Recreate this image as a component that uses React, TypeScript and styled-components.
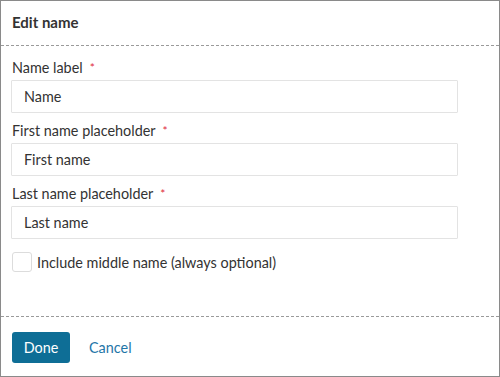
import React from "react";
import styled, { createGlobalStyle } from "styled-components";

const Global = createGlobalStyle`
  html, body { margin: 0; padding: 0; background: #fff; }
  body { font-family: Lato, "Open Sans", sans-serif; color: #333; }
  * { box-sizing: border-box; }
`;

const Dialog = styled.div`
  width: 500px;
  height: 377px;
  border: 1px solid #8a8a8a;
  display: flex;
  flex-direction: column;
  background: #fff;
`;

const Header = styled.div`
  height: 45px;
  flex: none;
  border-bottom: 1px dashed #9a9a9a;
  display: flex;
  align-items: center;
  padding: 0 11px;
`;

const Title = styled.h2`
  margin: 0;
  font-size: 15px;
  font-weight: 700;
  color: #333;
  padding-bottom: 2px;
`;

const Body = styled.div`
  flex: 1;
  padding: 12px 10px 0;
  display: flex;
  flex-direction: column;
  gap: 8px;
`;

const Field = styled.div`
  display: flex;
  flex-direction: column;
  gap: 2px;
  width: 447px;
`;

const Label = styled.label`
  font-size: 14.4px;
  line-height: 20px;
  color: #333;
  padding-left: 1px;
`;

const Required = styled.span`
  color: #e02b3b;
  margin-left: 7px;
  font-size: 12px;
  vertical-align: 1px;
`;

const Input = styled.input`
  height: 33px;
  width: 100%;
  border: 1px solid #e3e3e3;
  border-radius: 1px;
  padding: 0 12px;
  font-family: Lato, "Open Sans", sans-serif;
  font-size: 14.4px;
  color: #333;
  outline: none;
  &::placeholder { color: #333; }
`;

const CheckRow = styled.label`
  display: flex;
  align-items: center;
  gap: 5px;
  margin-top: 5px;
  font-size: 14.4px;
  color: #333;
  padding-left: 1px;
`;

const Box = styled.span`
  width: 20px;
  height: 20px;
  border: 1px solid #dcdcdc;
  border-radius: 3px;
  background: #fff;
  flex: none;
`;

const Footer = styled.div`
  height: 60px;
  flex: none;
  border-top: 1px dashed #9a9a9a;
  display: flex;
  align-items: center;
  gap: 19px;
  padding: 2px 11px 0;
`;

const Primary = styled.button`
  height: 31px;
  width: 58px;
  border: none;
  border-radius: 3px;
  background: #0e6e96;
  color: #fff;
  font-family: Lato, "Open Sans", sans-serif;
  font-size: 14.4px;
  cursor: pointer;
`;

const LinkButton = styled.button`
  border: none;
  background: none;
  padding: 0;
  color: #1f76a8;
  font-family: Lato, "Open Sans", sans-serif;
  font-size: 14.4px;
  cursor: pointer;
`;

const fields = [
  { label: "Name label", value: "Name" },
  { label: "First name placeholder", value: "First name" },
  { label: "Last name placeholder", value: "Last name" },
];

export default function App() {
  return (
    <>
      <Global />
      <Dialog>
        <Header>
          <Title>Edit name</Title>
        </Header>
        <Body>
          {fields.map((f) => (
            <Field key={f.label}>
              <Label>
                {f.label}
                <Required>*</Required>
              </Label>
              <Input defaultValue={f.value} />
            </Field>
          ))}
          <CheckRow>
            <Box />
            Include middle name (always optional)
          </CheckRow>
        </Body>
        <Footer>
          <Primary>Done</Primary>
          <LinkButton>Cancel</LinkButton>
        </Footer>
      </Dialog>
    </>
  );
}
